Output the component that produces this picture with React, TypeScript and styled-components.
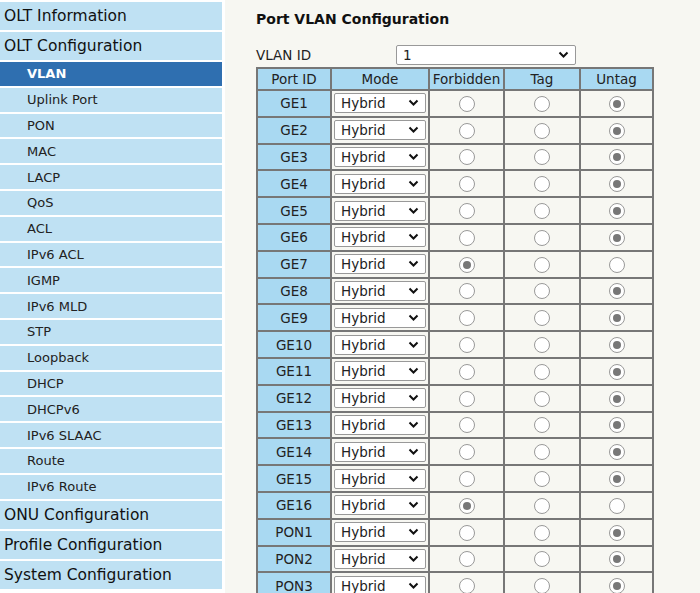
import React from "react";
import styled, { createGlobalStyle } from "styled-components";

const G = createGlobalStyle`
  html,body{margin:0;padding:0;height:593px;overflow:hidden;background:#fff;}
  body{font-family:"DejaVu Sans",Verdana,sans-serif;}
`;
const Page = styled.div`display:flex;height:593px;`;
const Side = styled.div`width:222px;display:flex;flex-direction:column;gap:2px;padding-top:2px;flex-shrink:0;`;
const Top = styled.div`background:#bfe1f3;height:28px;display:flex;align-items:center;padding-left:4px;font-size:15.5px;color:#111;`;
const Sub = styled.div<{ $active?: boolean }>`background:${p => p.$active ? "#2f6fb0" : "#bfe1f3"};color:${p => p.$active ? "#fff" : "#222"};font-weight:${p => p.$active ? "bold" : "normal"};height:23.8px;display:flex;align-items:center;padding-left:27px;font-size:13px;`;
const Main = styled.div`flex:1;margin-left:3px;background:#f7f7f2;display:flex;flex-direction:column;`;
const TabBar = styled.div`display:flex;height:5px;gap:2px;background:#fff;`;
const Tab = styled.div<{ $w: number; $dark?: boolean }>`width:${p => p.$w}px;background:${p => p.$dark ? "#3f78b4" : "#bfe1f3"};`;
const Content = styled.div`padding:11px 0 0 31px;`;
const Title = styled.div`font-weight:bold;font-size:14px;color:#111;margin-bottom:17px;`;
const IdRow = styled.div`display:flex;align-items:center;height:22px;font-size:13.5px;color:#222;margin-bottom:1px;`;
const IdLabel = styled.div`width:140px;`;
const Sel = styled.div<{ $w: number }>`width:${p => p.$w}px;height:20px;border:1px solid #999;border-radius:2px;background:#fff;display:flex;align-items:center;justify-content:space-between;padding:0 6px;box-sizing:border-box;font-size:13.5px;color:#222;`;
const Table = styled.table`border-collapse:collapse;border:2px solid #777;font-size:13.5px;color:#222;`;
const Th = styled.th<{ $w: number }>`width:${p => p.$w}px;background:#a9d9f2;border:2px solid #777;font-weight:normal;height:20px;padding:0;`;
const Td = styled.td<{ $port?: boolean }>`background:${p => p.$port ? "#a9d9f2" : "#f7f7f2"};border:2px solid #777;height:24.8px;padding:0 2px;text-align:center;`;
const Radio = styled.span<{ $on?: boolean }>`display:inline-block;width:14px;height:14px;border-radius:50%;border:1px solid #999;background:#fff;vertical-align:middle;position:relative;
  &::after{content:"";display:${p => p.$on ? "block" : "none"};position:absolute;left:3px;top:3px;width:8px;height:8px;border-radius:50%;background:#777;}`;

const Chev = () => (
  <svg width="11" height="8" viewBox="0 0 11 8"><path d="M1.5 1.5 L5.5 5.5 L9.5 1.5" stroke="#111" strokeWidth="2" fill="none" /></svg>
);

const subs = ["VLAN", "Uplink Port", "PON", "MAC", "LACP", "QoS", "ACL", "IPv6 ACL", "IGMP", "IPv6 MLD", "STP", "Loopback", "DHCP", "DHCPv6", "IPv6 SLAAC", "Route", "IPv6 Route"];
const ports = [...Array.from({ length: 16 }, (_, i) => "GE" + (i + 1)), "PON1", "PON2", "PON3", "PON4"];

export default function App() {
  return (
    <Page>
      <G />
      <Side>
        <Top>OLT Information</Top>
        <Top>OLT Configuration</Top>
        {subs.map((s, i) => <Sub key={s} $active={i === 0}>{s}</Sub>)}
        <Top>ONU Configuration</Top>
        <Top>Profile Configuration</Top>
        <Top>System Configuration</Top>
      </Side>
      <Main>
        <TabBar><Tab $w={70} /><Tab $w={92} $dark /><Tab $w={140} /><Tab $w={170} /></TabBar>
        <Content>
          <Title>Port VLAN Configuration</Title>
          <IdRow><IdLabel>VLAN ID</IdLabel><Sel $w={180}>1<Chev /></Sel></IdRow>
          <Table>
            <thead><tr><Th $w={72}>Port ID</Th><Th $w={96}>Mode</Th><Th $w={73}>Forbidden</Th><Th $w={74}>Tag</Th><Th $w={71}>Untag</Th></tr></thead>
            <tbody>
              {ports.map(p => {
                const f = p === "GE7" || p === "GE16";
                return (
                  <tr key={p}>
                    <Td $port>{p}</Td>
                    <Td><Sel $w={92}>Hybrid<Chev /></Sel></Td>
                    <Td><Radio $on={f} /></Td>
                    <Td><Radio /></Td>
                    <Td><Radio $on={!f} /></Td>
                  </tr>
                );
              })}
            </tbody>
          </Table>
        </Content>
      </Main>
    </Page>
  );
}
